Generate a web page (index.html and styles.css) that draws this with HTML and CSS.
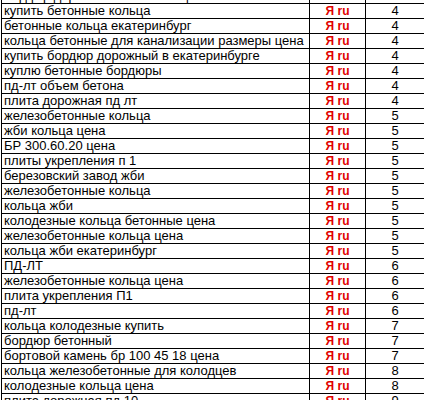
FILE: index.html
```html
<!DOCTYPE html>
<html lang="ru">
<head>
    <meta charset="UTF-8">
    <meta name="viewport" content="width=device-width, initial-scale=1.0">
    <title>Позиции запросов</title>
    <link rel="stylesheet" href="styles.css">
</head>
<body>
    <table class="positions">
        <tr><td class="query">бордюр дорожный бетонный цена</td><td class="engine">Я ru</td><td class="pos">4</td></tr>
        <tr><td class="query">купить бетонные кольца</td><td class="engine">Я ru</td><td class="pos">4</td></tr>
        <tr><td class="query">бетонные кольца екатеринбург</td><td class="engine">Я ru</td><td class="pos">4</td></tr>
        <tr><td class="query">кольца бетонные для канализации размеры цена</td><td class="engine">Я ru</td><td class="pos">4</td></tr>
        <tr><td class="query">купить бордюр дорожный в екатеринбурге</td><td class="engine">Я ru</td><td class="pos">4</td></tr>
        <tr><td class="query">куплю бетонные бордюры</td><td class="engine">Я ru</td><td class="pos">4</td></tr>
        <tr><td class="query">пд-лт объем бетона</td><td class="engine">Я ru</td><td class="pos">4</td></tr>
        <tr><td class="query">плита дорожная пд лт</td><td class="engine">Я ru</td><td class="pos">4</td></tr>
        <tr><td class="query">железобетонные кольца</td><td class="engine">Я ru</td><td class="pos">5</td></tr>
        <tr><td class="query">жби кольца цена</td><td class="engine">Я ru</td><td class="pos">5</td></tr>
        <tr><td class="query">БР 300.60.20 цена</td><td class="engine">Я ru</td><td class="pos">5</td></tr>
        <tr><td class="query">плиты укрепления п 1</td><td class="engine">Я ru</td><td class="pos">5</td></tr>
        <tr><td class="query">березовский завод жби</td><td class="engine">Я ru</td><td class="pos">5</td></tr>
        <tr><td class="query">железобетонные кольца</td><td class="engine">Я ru</td><td class="pos">5</td></tr>
        <tr><td class="query">кольца жби</td><td class="engine">Я ru</td><td class="pos">5</td></tr>
        <tr><td class="query">колодезные кольца бетонные цена</td><td class="engine">Я ru</td><td class="pos">5</td></tr>
        <tr><td class="query">железобетонные кольца цена</td><td class="engine">Я ru</td><td class="pos">5</td></tr>
        <tr><td class="query">кольца жби екатеринбург</td><td class="engine">Я ru</td><td class="pos">5</td></tr>
        <tr><td class="query">ПД-ЛТ</td><td class="engine">Я ru</td><td class="pos">6</td></tr>
        <tr><td class="query">железобетонные кольца цена</td><td class="engine">Я ru</td><td class="pos">6</td></tr>
        <tr><td class="query">плита укрепления П1</td><td class="engine">Я ru</td><td class="pos">6</td></tr>
        <tr><td class="query">пд-лт</td><td class="engine">Я ru</td><td class="pos">6</td></tr>
        <tr><td class="query">кольца колодезные купить</td><td class="engine">Я ru</td><td class="pos">7</td></tr>
        <tr><td class="query">бордюр бетонный</td><td class="engine">Я ru</td><td class="pos">7</td></tr>
        <tr><td class="query">бортовой камень бр 100 45 18 цена</td><td class="engine">Я ru</td><td class="pos">7</td></tr>
        <tr><td class="query">кольца железобетонные для колодцев</td><td class="engine">Я ru</td><td class="pos">8</td></tr>
        <tr><td class="query">колодезные кольца цена</td><td class="engine">Я ru</td><td class="pos">8</td></tr>
        <tr><td class="query">плита дорожная пд 10</td><td class="engine">Я ru</td><td class="pos">9</td></tr>
    </table>
</body>
</html>
```

FILE: styles.css
```css
* {
    margin: 0;
    padding: 0;
    box-sizing: border-box;
}

body {
    font-family: "Liberation Sans", Arial, sans-serif;
    font-size: 13px;
    color: #000;
    background: #fff;
    overflow: hidden;
}

.positions {
    border-collapse: separate;
    border-spacing: 0;
    border-left: 1px solid #000;
    margin: -11px 0 0 1px;
    table-layout: fixed;
    width: 423px;
}

.positions td {
    height: 15px;
    line-height: 14px;
    border-right: 1px solid #000;
    border-bottom: 1px solid #000;
    white-space: nowrap;
    overflow: hidden;
    vertical-align: middle;
}

.query {
    width: 308px;
    padding-left: 2px;
}

.engine {
    width: 56px;
    text-align: center;
    color: #e00000;
    font-weight: bold;
    font-size: 12px;
}

.pos {
    width: 59px;
    text-align: center;
}
```
